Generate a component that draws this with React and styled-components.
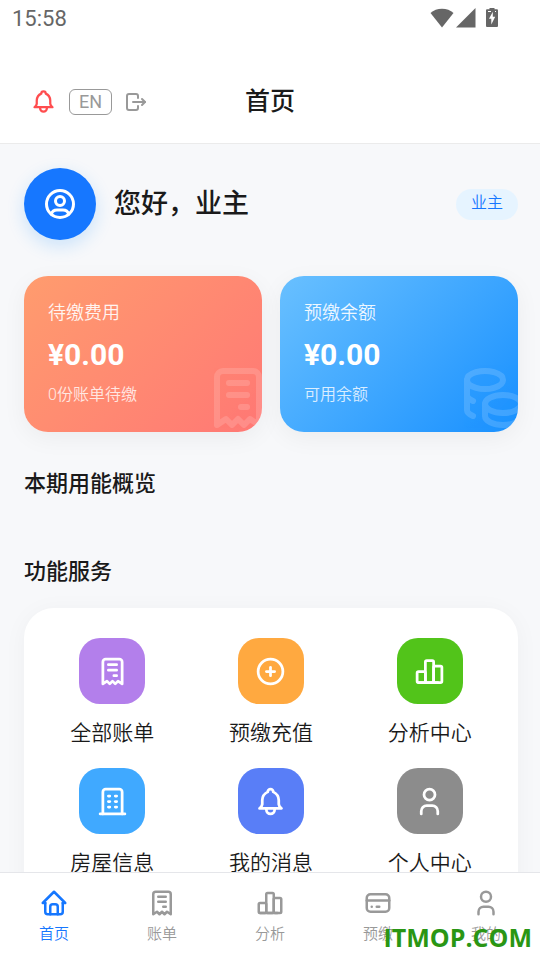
import React, { useState } from "react";
import styled, { createGlobalStyle } from "styled-components";
import {
  TbBell,
  TbBuilding,
  TbChartBar,
  TbCirclePlus,
  TbCoins,
  TbCreditCard,
  TbHome,
  TbLogout,
  TbReceipt,
  TbUser,
  TbUserCircle,
} from "react-icons/tb";

const GlobalStyle = createGlobalStyle`
  * {
    box-sizing: border-box;
  }

  body {
    margin: 0;
    font-family: Roboto, "Noto Sans CJK SC", sans-serif;
    font-weight: 350;
    color: #1a1a1a;
    background: #f7f8fa;
  }

  button {
    padding: 0;
    border: 0;
    background: none;
    font: inherit;
    color: inherit;
    cursor: pointer;
  }

  svg {
    display: block;
    flex: none;
  }
`;

const Screen = styled.div`
  display: flex;
  flex-direction: column;
  height: 100vh;
`;

const StatusBar = styled.div`
  display: flex;
  align-items: center;
  justify-content: space-between;
  height: 36px;
  padding: 0 41px 0 12px;
  background: #fff;
  color: #666;
  font-size: 22px;
  font-weight: 400;
`;

const StatusIcons = styled.div`
  display: flex;
  align-items: center;
  gap: 2px;
  padding-bottom: 1px;
`;

const Header = styled.header`
  display: grid;
  grid-template-columns: 1fr auto 1fr;
  align-items: center;
  padding: 34px 30px 10px;
  background: #fff;
  border-bottom: 1px solid #ebebeb;
`;

const HeaderTitle = styled.h1`
  margin: 0;
  font-size: 25px;
  font-weight: 500;
  line-height: 63px;
`;

const HeaderActions = styled.div`
  display: flex;
  align-items: center;
  gap: 12px;
`;

const IconButton = styled.button`
  && {
    color: ${({ $color }) => $color};
  }
`;

const LangButton = styled.button`
  && {
    padding: 0 9px;
    border: 1px solid #999;
    border-radius: 6px;
    font-size: 18px;
    font-weight: 400;
    line-height: 24px;
    color: #999;
  }
`;

const Content = styled.main`
  flex: 1;
  min-height: 0;
  padding: 24px 22px 24px 24px;
  overflow-y: auto;
  scrollbar-width: none;
`;

const Welcome = styled.section`
  display: flex;
  align-items: center;
  gap: 18px;
`;

const Avatar = styled.div`
  display: flex;
  align-items: center;
  justify-content: center;
  width: 72px;
  height: 72px;
  border-radius: 50%;
  background: #1677ff;
  color: #fff;
  box-shadow: 0 6px 18px rgba(24, 144, 255, 0.2);
`;

const Greeting = styled.h2`
  flex: 1;
  margin: 0;
  font-size: 27px;
  font-weight: 500;
  line-height: 36px;
`;

const RoleTag = styled.span`
  padding: 0 15px 3px;
  border-radius: 16px;
  background: #e6f4ff;
  color: #1677ff;
  font-size: 16px;
  line-height: 28px;
`;

const Balances = styled.section`
  display: grid;
  grid-template-columns: 1fr 1fr;
  gap: 18px;
  margin-top: 36px;
`;

const BalanceCard = styled.div`
  position: relative;
  overflow: hidden;
  padding: 24px 24px 25px;
  border-radius: 24px;
  background: linear-gradient(135deg, ${({ $from }) => $from}, ${({ $to }) => $to});
  box-shadow: 0 6px 24px rgba(0, 0, 0, 0.05);
  color: #fff;
`;

const BalanceLabel = styled.div`
  font-size: 18px;
  line-height: 26px;
  opacity: 0.9;
`;

const BalanceAmount = styled.div`
  margin: 11px 0 10px;
  font-size: 30px;
  font-weight: 700;
  line-height: 36px;
`;

const BalanceNote = styled.div`
  font-size: 16px;
  line-height: 24px;
  opacity: 0.8;
`;

const BalanceIcon = styled.div`
  position: absolute;
  right: -12px;
  bottom: -2px;
  opacity: 0.15;
`;

const SectionTitle = styled.h3`
  margin: ${({ $top }) => $top}px 0 0;
  font-size: 22px;
  font-weight: 500;
  line-height: 30px;
`;

const Services = styled.div`
  display: grid;
  grid-template-columns: repeat(3, 1fr);
  row-gap: 20px;
  margin-top: 21px;
  padding: 30px 9px;
  border-radius: 30px;
  background: #fff;
  box-shadow: 0 3px 24px rgba(0, 0, 0, 0.04);
`;

const ServiceButton = styled.button`
  display: flex;
  flex-direction: column;
  align-items: center;
  gap: 14px;
  && {
    font-size: 21px;
    line-height: 30px;
  }
`;

const ServiceIcon = styled.span`
  display: flex;
  align-items: center;
  justify-content: center;
  width: 66px;
  height: 66px;
  border-radius: 21px;
  background: ${({ $color }) => $color};
  color: #fff;
`;

const TabBar = styled.nav`
  position: relative;
  display: flex;
  height: 88px;
  border-top: 1px solid #e5e6ea;
  background: #fff;
`;

const TabLink = styled.a`
  display: flex;
  flex: 1;
  flex-direction: column;
  align-items: center;
  gap: 5px;
  padding-top: 15px;
  color: ${({ $active }) => ($active ? "#1677ff" : "#999")};
  font-size: 15px;
  line-height: 22px;
  text-decoration: none;
`;

const Watermark = styled.div`
  position: absolute;
  right: 8px;
  bottom: 5px;
  color: #2a9614;
  font-family: "Open Sans", sans-serif;
  font-size: 25px;
  font-weight: 700;
  line-height: 36px;
  pointer-events: none;
`;

const services = [
  { label: "全部账单", color: "#b37feb", Icon: TbReceipt },
  { label: "预缴充值", color: "#ffa940", Icon: TbCirclePlus },
  { label: "分析中心", color: "#52c41a", Icon: TbChartBar },
  { label: "房屋信息", color: "#40a9ff", Icon: TbBuilding },
  { label: "我的消息", color: "#597ef7", Icon: TbBell },
  { label: "个人中心", color: "#8c8c8c", Icon: TbUser },
];

const tabs = [
  { id: "home", label: "首页", Icon: TbHome },
  { id: "bills", label: "账单", Icon: TbReceipt },
  { id: "stats", label: "分析", Icon: TbChartBar },
  { id: "prepay", label: "预缴", Icon: TbCreditCard },
  { id: "me", label: "我的", Icon: TbUser },
];

const WifiIcon = () => (
  <svg width="24" height="20" viewBox="0 0 24 20" fill="currentColor" aria-hidden="true">
    <path d="M12 19.5 .5 5C3.500 2.300 7.500.8 12 .8S20.500 2.300 23.500 5z" />
  </svg>
);

const SignalIcon = () => (
  <svg width="20" height="20" viewBox="0 0 20 20" fill="currentColor" aria-hidden="true">
    <path d="M0 19.500 19.500 0v19.500z" />
  </svg>
);

const BatteryIcon = () => (
  <svg width="21" height="20" viewBox="1 0 21 20" aria-hidden="true">
    <path
      fill="currentColor"
      d="M12.500 0h5v1.200h2.200c.8 0 1.300.5 1.300 1.300v15.200c0 .8-.5 1.300-1.300 1.300h-9.400c-.8 0-1.300-.5-1.300-1.300V2.500c0-.8.5-1.300 1.300-1.300h2.200z"
    />
    <path fill="#fff" d="M15.800 3.800 12 10.800h2.300v5.600l3.900-7.600h-2.400zM11 3h3v1h-3zM18 3h1v1h-1z" />
  </svg>
);

const App = () => {
  const [activeTab, setActiveTab] = useState("home");

  return (
    <Screen>
      <GlobalStyle />
      <StatusBar>
        <span>15:58</span>
        <StatusIcons>
          <WifiIcon />
          <SignalIcon />
          <BatteryIcon />
        </StatusIcons>
      </StatusBar>
      <Header>
        <HeaderActions>
          <IconButton $color="#ff4d4f" aria-label="消息">
            <TbBell size={27} />
          </IconButton>
          <LangButton>EN</LangButton>
          <IconButton $color="#999" aria-label="退出">
            <TbLogout size={24} />
          </IconButton>
        </HeaderActions>
        <HeaderTitle>首页</HeaderTitle>
      </Header>

      <Content>
        <Welcome>
          <Avatar>
            <TbUserCircle size={36} />
          </Avatar>
          <Greeting>您好，业主</Greeting>
          <RoleTag>业主</RoleTag>
        </Welcome>

        <Balances>
          <BalanceCard $from="#ff9c6e" $to="#ff7875">
            <BalanceLabel>待缴费用</BalanceLabel>
            <BalanceAmount>¥0.00</BalanceAmount>
            <BalanceNote>0份账单待缴</BalanceNote>
            <BalanceIcon>
              <TbReceipt size={72} />
            </BalanceIcon>
          </BalanceCard>
          <BalanceCard $from="#69c0ff" $to="#1890ff">
            <BalanceLabel>预缴余额</BalanceLabel>
            <BalanceAmount>¥0.00</BalanceAmount>
            <BalanceNote>可用余额</BalanceNote>
            <BalanceIcon>
              <TbCoins size={72} />
            </BalanceIcon>
          </BalanceCard>
        </Balances>

        <SectionTitle $top={37}>本期用能概览</SectionTitle>
        <SectionTitle $top={58}>功能服务</SectionTitle>
        <Services>
          {services.map(({ label, color, Icon }) => (
            <ServiceButton key={label}>
              <ServiceIcon $color={color}>
                <Icon size={33} />
              </ServiceIcon>
              {label}
            </ServiceButton>
          ))}
        </Services>
      </Content>

      <TabBar>
        {tabs.map(({ id, label, Icon }) => (
          <TabLink
            key={id}
            href={`#${id}`}
            $active={activeTab === id}
            onClick={() => setActiveTab(id)}
          >
            <Icon size={30} />
            {label}
          </TabLink>
        ))}
        <Watermark>ITMOP.COM</Watermark>
      </TabBar>
    </Screen>
  );
};

export default App;
